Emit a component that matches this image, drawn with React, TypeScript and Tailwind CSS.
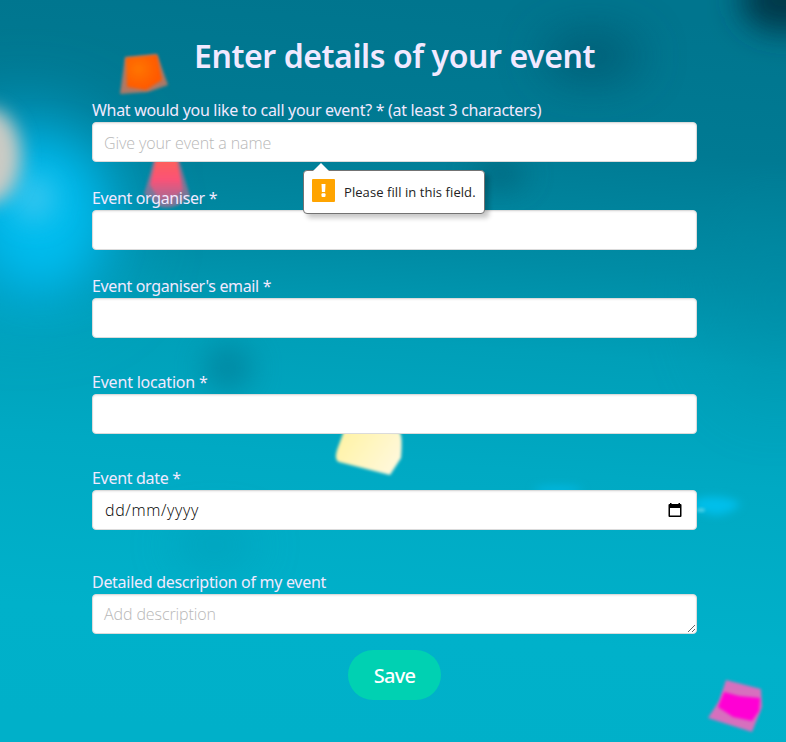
import type { ReactNode } from "react";

const fieldClass =
  "block h-10 w-full rounded-[4px] border border-[#dbdbdb] bg-white px-[11px] text-[16px] text-[#363636] shadow-[inset_0_1px_2px_rgba(10,10,10,0.07)] outline-none placeholder:text-[#b8b8b8] font-['Open_Sans','Noto_Sans',sans-serif] font-light tracking-[-0.1px]";
const inputClass = `${fieldClass} pt-[2px]`;

function Backdrop() {
  return (
    <svg className="absolute inset-0 -z-10 h-full w-full" viewBox="0 0 786 742" preserveAspectRatio="none" aria-hidden="true">
      <defs>
        <linearGradient id="sea" x1="0.54" y1="0" x2="0.46" y2="1">
          <stop offset="0" stopColor="#00758e" />
          <stop offset="0.18" stopColor="#007a93" />
          <stop offset="0.34" stopColor="#008ca5" />
          <stop offset="0.46" stopColor="#009fb8" />
          <stop offset="0.62" stopColor="#00a9c3" />
          <stop offset="0.85" stopColor="#00b1ca" />
          <stop offset="1" stopColor="#00b0c9" />
        </linearGradient>
        <radialGradient id="orange" cx="0.35" cy="0.4" r="0.6">
          <stop offset="0" stopColor="#ff7500" />
          <stop offset="1" stopColor="#ff5800" />
        </radialGradient>
        <linearGradient id="coral" x1="0" y1="0" x2="0" y2="1">
          <stop offset="0" stopColor="#ff6450" />
          <stop offset="0.55" stopColor="#fb5276" />
          <stop offset="1" stopColor="#d75c8a" stopOpacity="0.5" />
        </linearGradient>
        <linearGradient id="cream" x1="0" y1="0" x2="1" y2="0.5">
          <stop offset="0" stopColor="#fff29f" />
          <stop offset="1" stopColor="#fff8d8" />
        </linearGradient>
        <filter id="b1" x="-50%" y="-50%" width="200%" height="200%"><feGaussianBlur stdDeviation="1.6" /></filter>
        <filter id="b3" x="-50%" y="-150%" width="200%" height="400%"><feGaussianBlur stdDeviation="4.5" /></filter>
        <filter id="b8" x="-150%" y="-150%" width="400%" height="400%"><feGaussianBlur stdDeviation="9" /></filter>
        <filter id="b14" x="-200%" y="-200%" width="500%" height="500%"><feGaussianBlur stdDeviation="15" /></filter>
        <filter id="b20" x="-200%" y="-200%" width="500%" height="500%"><feGaussianBlur stdDeviation="24" /></filter>
        <filter id="b40" x="-150%" y="-150%" width="400%" height="400%"><feGaussianBlur stdDeviation="38" /></filter>
      </defs>
      <rect width="786" height="742" fill="url(#sea)" />
      <ellipse cx="25" cy="210" rx="95" ry="95" fill="#00abdc" filter="url(#b40)" />
      <ellipse cx="42" cy="218" rx="52" ry="66" fill="#00bdef" filter="url(#b20)" />
      <ellipse cx="34" cy="198" rx="20" ry="22" fill="#58ccf0" opacity="0.7" filter="url(#b14)" />
      <ellipse cx="-12" cy="156" rx="33" ry="48" fill="#cbcbc4" filter="url(#b8)" />
      <ellipse cx="784" cy="0" rx="44" ry="32" fill="#00384a" filter="url(#b14)" />
      <ellipse cx="592" cy="56" rx="50" ry="22" fill="#004a60" opacity="0.65" filter="url(#b20)" />
      <ellipse cx="500" cy="174" rx="26" ry="12" fill="#005d73" opacity="0.8" filter="url(#b14)" />
      <ellipse cx="228" cy="368" rx="24" ry="22" fill="#007e98" opacity="0.75" filter="url(#b14)" />
      <ellipse cx="215" cy="545" rx="42" ry="14" fill="#0091ad" opacity="0.6" filter="url(#b20)" />
      <ellipse cx="775" cy="300" rx="60" ry="100" fill="#008ba5" opacity="0.3" filter="url(#b40)" />
      <path d="M120 94 L125 57 L157 54 L168 85 L148 92 Z" fill="#e77958" opacity="0.75" filter="url(#b1)" />
      <path d="M126 58 L157 55 L162 80 L146 90 L127 87 Z" fill="url(#orange)" filter="url(#b1)" />
      <path d="M155 156 H178 L190 196 Q177 210 161 207 L144 194 Z" fill="#cf6a91" opacity="0.6" filter="url(#b1)" />
      <path d="M157 154 H176 L183 190 Q168 206 158 198 L150 185 Z" fill="url(#coral)" filter="url(#b1)" />
      <path d="M345 428 L399 432 Q403 434 401 458 L390 475 L339 462 Q334 460 337 450 Z" fill="url(#cream)" filter="url(#b1)" />
      <path d="M694 500 Q720 492 741 504 Q727 516 714 515 L694 509 Z" fill="#00bfeb" filter="url(#b3)" />
      <ellipse cx="701" cy="510" rx="4" ry="2" fill="#5bd5e9" opacity="0.8" filter="url(#b1)" />
      <ellipse cx="558" cy="490" rx="24" ry="4" fill="#00b8e2" filter="url(#b3)" />
      <path d="M726 680 L761 689 L762 707 L752 732 L708 718 L719 701 Z" fill="#ef69bd" opacity="0.9" filter="url(#b1)" />
      <path d="M724 692 L739 696 L760 698 L759 711 L752 721 L733 717 L718 707 Z" fill="#ff00d4" filter="url(#b1)" />
    </svg>
  );
}

function Field({ label, tracking, gap, children }: { label: string; tracking: string; gap: string; children: ReactNode }) {
  return (
    <div className={gap}>
      <label className={`block h-6 whitespace-nowrap text-[16px] leading-6 text-[#f1e9ff] ${tracking}`}>{label}</label>
      {children}
    </div>
  );
}

function ValidationBubble() {
  return (
    <div className="absolute left-[211px] top-12 z-10 flex h-[44px] w-[182px] items-start rounded-[4px] border border-[#737373] bg-white pl-2 pt-2 shadow-[4px_4px_5px_rgba(0,0,0,0.22)]">
      <svg className="absolute -top-[8px] left-[8px]" width="18" height="9" viewBox="0 0 18 9" aria-hidden="true">
        <path d="M0 9 L1 8 L9 0 L17 8 L18 9 Z" fill="#fff" />
      </svg>
      <svg width="23" height="23" viewBox="0 0 23 23" aria-hidden="true">
        <rect width="23" height="23" rx="1" fill="#ffa400" />
        <path d="M9.5 5h4l-.4 8h-3.2z" fill="#fff" />
        <rect x="9.5" y="14.3" width="4" height="3.6" rx="1" fill="#fff" />
      </svg>
      <span className="ml-[9px] mt-[4px] whitespace-nowrap font-['Open_Sans','Noto_Sans',sans-serif] text-[13px] leading-[18px] text-[#222] tracking-[0.07px]">Please fill in this field.</span>
    </div>
  );
}

export default function App() {
  return (
    <main className="relative isolate h-[742px] w-[786px] overflow-hidden pl-[92px] pr-[89px] pt-[38px] font-['Noto_Sans','Open_Sans',sans-serif]">
      <Backdrop />
      <h1 className="h-[60px] whitespace-nowrap text-center text-[32px] font-semibold leading-9 tracking-[-0.42px] text-[#f1e9ff]">Enter details of your event</h1>
      <form noValidate>
        <Field label="What would you like to call your event? * (at least 3 characters)" tracking="tracking-[-0.3px]" gap="mb-6">
          <div className="relative">
            <input className={inputClass} placeholder="Give your event a name" />
            <ValidationBubble />
          </div>
        </Field>
        <Field label="Event organiser *" tracking="tracking-[-0.35px]" gap="mb-6">
          <input className={inputClass} />
        </Field>
        <Field label="Event organiser's email *" tracking="tracking-[-0.35px]" gap="mb-8">
          <input className={inputClass} />
        </Field>
        <Field label="Event location *" tracking="tracking-[-0.2px]" gap="mb-8">
          <input className={inputClass} />
        </Field>
        <Field label="Event date *" tracking="tracking-[-0.3px]" gap="mb-10">
          <div className="flex h-10 w-full items-center justify-between rounded-[4px] border border-[#dbdbdb] bg-white pl-3 pr-[14px] shadow-[inset_0_1px_2px_rgba(10,10,10,0.07)]">
            <span className="font-['Open_Sans','Noto_Sans',sans-serif] text-[16px] font-light tracking-[0.65px] text-black">dd/mm/yyyy</span>
            <svg width="14" height="14" viewBox="0 0 14 14" aria-hidden="true">
              <path d="M2 0h1.5v1h7V0H12v1h.5a1 1 0 0 1 1 1v11a1 1 0 0 1-1 1h-11a1 1 0 0 1-1-1V2a1 1 0 0 1 1-1H2zM2 5v7.6h10V5z" fill="#000" fillRule="evenodd" />
            </svg>
          </div>
        </Field>
        <Field label="Detailed description of my event" tracking="tracking-[-0.29px]" gap="mb-4">
          <textarea className={`${fieldClass} resize-y py-[7px] leading-6`} placeholder="Add description" />
        </Field>
        <button type="button" className="mx-auto block h-[50px] w-[93px] rounded-full bg-[#00d1b2] pt-[2px] text-[20px] font-medium tracking-[-0.7px] text-white">Save</button>
      </form>
    </main>
  );
}
